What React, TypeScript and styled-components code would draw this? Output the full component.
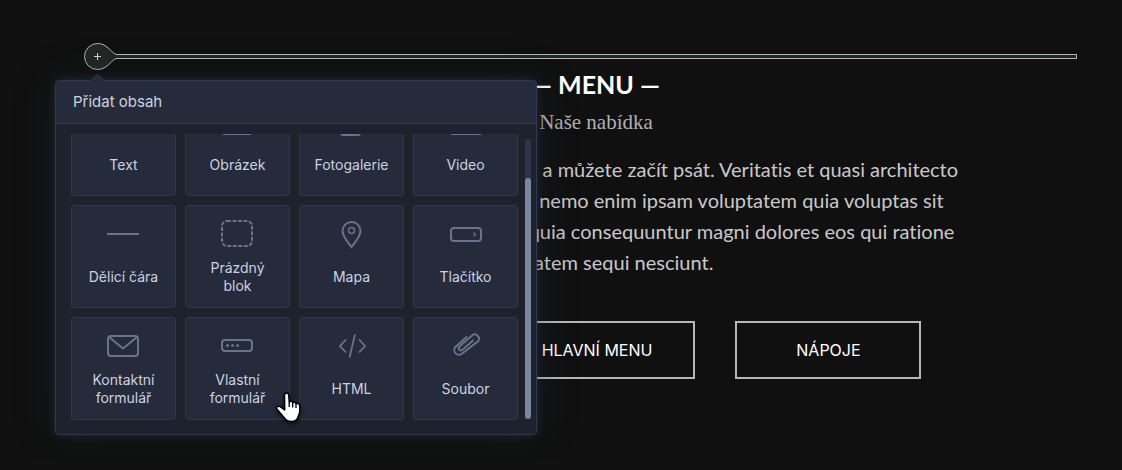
import React, { useLayoutEffect, useRef } from 'react';
import styled, { createGlobalStyle } from 'styled-components';

const GlobalStyle = createGlobalStyle`
  *, *::before, *::after { box-sizing: border-box; }
  html { background: #101010; }
  body {
    margin: 0;
    overflow-x: hidden;
    font-family: Lato, 'Liberation Sans', sans-serif;
    font-variant-ligatures: none;
    color: #c9c9c9;
  }
`;

const Page = styled.div`
  padding: 42px 45px 80px 83px;
`;

const InsertBar = styled.div`
  position: relative;
  display: flex;
  align-items: center;
  height: 28px;
`;

const InsertButton = styled.button`
  display: block;
  flex: none;
  width: 33px;
  height: 28px;
  padding: 0;
  border: 0;
  background: none;
  cursor: pointer;

  svg { display: block; }
`;

const InsertLine = styled.div`
  flex: 1;
  height: 5px;
  background: #222625;
  border: 1px solid #b5b9b6;
  border-left: 0;
`;

const Popover = styled.section`
  position: absolute;
  z-index: 2;
  top: 38px;
  left: -28px;
  width: 482px;
  font-family: Inter, 'Noto Sans', sans-serif;
  color: #ccd2e2;
  background: #1d222d;
  border: 1px solid #2f384e;
  border-radius: 4px;
  box-shadow: 0 0 10px rgba(66, 105, 140, 0.3), 0 0 40px rgba(30, 45, 55, 0.3);
`;

const PopoverArrow = styled.svg`
  position: absolute;
  top: -8px;
  left: 33px;
`;

const PopoverHeader = styled.header`
  display: flex;
  align-items: center;
  height: 43px;
  padding: 0 17px;
  background: #252b3a;
  border-bottom: 1px solid #2f384e;
  border-radius: 3px 3px 0 0;
`;

const PopoverTitle = styled.h2`
  margin: 0;
  font-size: 15px;
  font-weight: 400;
  line-height: 20px;
`;

const PopoverBody = styled.div`
  display: flex;
  gap: 7px;
  padding: 10px 5px 14px 15px;
`;

const BlockScroller = styled.div`
  flex: 1;
  height: 286px;
  overflow-y: auto;
  scrollbar-width: none;
`;

const BlockGrid = styled.div`
  display: grid;
  grid-template-columns: repeat(4, 1fr);
  grid-auto-rows: 103px;
  gap: 9px;
`;

const BlockCard = styled.button`
  display: flex;
  flex-direction: column;
  align-items: center;
  gap: 5px;
  padding: 8px 0 0;
  font: inherit;
  color: inherit;
  background: #252b3a;
  border: 1px solid #30374b;
  border-radius: 3px;
  cursor: pointer;
`;

const BlockIcon = styled.svg`
  flex: none;
  fill: none;
  stroke: #69738c;
  stroke-width: 2;
`;

const BlockLabel = styled.span`
  display: flex;
  align-items: center;
  height: 36px;
  max-width: 80px;
  font-size: 14px;
  line-height: 18px;
  text-align: center;
`;

const ScrollTrack = styled.div`
  display: flex;
  align-items: flex-end;
  width: 6px;
  margin: 5px 0 1px;
  background: #2d3449;
  border-radius: 3px;
`;

const ScrollThumb = styled.div`
  width: 100%;
  height: 86%;
  background: #7b859c;
  border-radius: 3px;
`;

const HandCursor = styled.svg`
  position: absolute;
  top: 310px;
  left: 219px;
  filter: drop-shadow(0 2px 2px rgba(0, 0, 0, 0.6));
  pointer-events: none;
`;

const Content = styled.main`
  display: flex;
  flex-direction: column;
  align-items: center;
  padding-left: 32px;
  text-align: center;
`;

const Heading = styled.h1`
  margin: 0;
  font-size: 25px;
  font-weight: 700;
  line-height: 28px;
  color: #fff;
`;

const Subtitle = styled.p`
  margin: 12px 0 20px;
  font-family: 'Liberation Serif', serif;
  font-size: 21px;
  line-height: 24px;
  color: #b0b0b0;
`;

const Paragraph = styled.p`
  margin: 0;
  font-size: 20px;
  line-height: 31px;
  white-space: nowrap;
`;

const Actions = styled.nav`
  display: flex;
  gap: 40px;
  margin-top: 43px;
`;

const ActionLink = styled.a`
  display: flex;
  align-items: center;
  justify-content: center;
  min-width: 186px;
  height: 58px;
  padding: 0 41px;
  font-family: Inter, sans-serif;
  font-size: 16px;
  color: #fff;
  text-decoration: none;
  border: 2px solid #b8b8b8;
`;

const blocks: { label: string; icon: React.ReactNode }[] = [
  { label: 'Text', icon: <path d="M11 11V7h19v4M20.5 7v22M16 29h9" /> },
  { label: 'Obrázek', icon: <><rect x="5" y="7" width="30" height="25" rx="3" /><path d="M6 26l8-9 7 8 5-5 8 7" /></> },
  { label: 'Fotogalerie', icon: <><rect x="4" y="6" width="28" height="21" rx="3" /><path d="M10 31q0 2 2 2h15q2 0 2-2" /></> },
  { label: 'Video', icon: <><rect x="5" y="7" width="32" height="25" rx="3" /><path d="M17 14l9 5-9 6z" /></> },
  { label: 'Dělicí čára', icon: <path d="M4 20h32" /> },
  { label: 'Prázdný blok', icon: <rect x="5" y="7" width="30" height="25" rx="5" strokeDasharray="4 1.5" /> },
  {
    label: 'Mapa',
    icon: (
      <>
        <path d="M20.5 33C17 28.5 11.5 22.5 11.5 17a9 9 0 0 1 18 0C29.5 22.5 24 28.5 20.5 33z" />
        <circle cx="20.5" cy="16.5" r="3" strokeWidth="1.5" />
      </>
    ),
  },
  {
    label: 'Tlačítko',
    icon: (
      <>
        <rect x="6" y="14" width="30" height="13" rx="3" />
        <path d="M28.5 18.5l2 2-2 2" strokeWidth="1.2" />
      </>
    ),
  },
  {
    label: 'Kontaktní formulář',
    icon: (
      <>
        <rect x="5" y="10" width="30" height="20" rx="3" />
        <path d="M6 11l14 11.5L34 11" />
      </>
    ),
  },
  {
    label: 'Vlastní formulář',
    icon: (
      <>
        <rect x="5" y="14" width="30" height="11" rx="3" />
        <path d="M10.5 19.5h.01M15.5 19.5h.01M20.5 19.5h.01" strokeWidth="3" strokeLinecap="round" />
      </>
    ),
  },
  { label: 'HTML', icon: <path d="M15 13.5L9 20l6 6.5M24 8.5L18.5 31.5M28 13.5l6 6.5-6 6.5" strokeWidth="1.8" /> },
  {
    label: 'Soubor',
    icon: (
      <path
        d="M21.5 11L10.7 20.7a4.7 4.7 0 0 0 6.6 6.7L33 15.3a4.2 4.2 0 0 0-6-5.8L14.8 20.3c-2.8 2.7.4 5.4 2.800 3.4L28 14.5"
        strokeWidth="1.9"
        strokeLinecap="round"
      />
    ),
  },
];

function AddContentPopover() {
  const scroller = useRef<HTMLDivElement>(null);

  useLayoutEffect(() => {
    const el = scroller.current;
    if (el) el.scrollTop = el.scrollHeight;
  }, []);

  return (
    <Popover aria-labelledby="add-content-title">
      <PopoverArrow width="18" height="9" viewBox="0 0 18 9" aria-hidden="true">
        <path d="M1 8.5L8.5 1L16 8.5" fill="#252b3a" stroke="#2f384e" />
      </PopoverArrow>
      <PopoverHeader>
        <PopoverTitle id="add-content-title">Přidat obsah</PopoverTitle>
      </PopoverHeader>
      <PopoverBody>
        <BlockScroller ref={scroller}>
          <BlockGrid>
            {blocks.map(({ label, icon }) => (
              <BlockCard key={label} type="button">
                <BlockIcon width="41" height="40" viewBox="0 0 41 40" aria-hidden="true">{icon}</BlockIcon>
                <BlockLabel>{label}</BlockLabel>
              </BlockCard>
            ))}
          </BlockGrid>
        </BlockScroller>
        <ScrollTrack>
          <ScrollThumb />
        </ScrollTrack>
      </PopoverBody>
      <HandCursor width="28" height="34" viewBox="0 0 28 34" aria-hidden="true">
        <path
          d="M9.5 4.5c0-3.2 4-3.2 4.3 0l.4 6.5c.8-1.2 3.2-.9 3.5.8 1-1 3-.6 3.3 1 1.2-.8 3.5-.2 3.7 2l.1 5c0 3-1.3 4.2-1.8 6.2-.8 3-3.3 4.5-6.5 4.5-3 0-5.3-1-7-3.5L2.2 18.5c-1.7-2.4 1-4.3 3.3-2.7L9.7 19z"
          fill="#fff"
          stroke="#000"
          strokeWidth="1.5"
          strokeLinejoin="round"
        />
        <path d="M14.2 11v5M17.7 11.8v4.7M21 12.8v4.2" fill="none" stroke="#000" strokeWidth="1.3" />
      </HandCursor>
    </Popover>
  );
}

export default function App() {
  return (
    <>
      <GlobalStyle />
      <Page>
        <InsertBar>
          <InsertButton type="button" aria-label="Přidat obsah">
            <svg width="33" height="28" viewBox="0 0 33 28" aria-hidden="true">
              <path
                d="M33 12.5C29.5 11 27.5 7.5 23 4.3C20.5 2.5 17.5 1.5 14.5 1.5A13 13 0 0 0 14.5 27.5C17.5 27.5 20.5 26.5 23 24.7C27.5 21.5 29.5 18 33 16.5"
                fill="#222625"
                stroke="#b5b9b6"
              />
              <path d="M11 14.5h7M14.5 11v7" stroke="#d5d8d6" />
            </svg>
          </InsertButton>
          <InsertLine />
          <AddContentPopover />
        </InsertBar>
        <Content>
          <Heading>— MENU —</Heading>
          <Subtitle>Naše nabídka</Subtitle>
          <Paragraph>
            Zde je váš blok textu. Klikněte sem a můžete začít psát. Veritatis et quasi architecto
            <br />
            beatae vitae dicta sunt explicabo nemo enim ipsam voluptatem quia voluptas sit
            <br />
            aspernatur aut odit aut fugit, sed quia consequuntur magni dolores eos qui ratione
            <br />
            voluptatem sequi nesciunt.
          </Paragraph>
          <Actions>
            <ActionLink href="#denni-menu">DENNÍ MENU</ActionLink>
            <ActionLink href="#hlavni-menu">HLAVNÍ MENU</ActionLink>
            <ActionLink href="#napoje">NÁPOJE</ActionLink>
          </Actions>
        </Content>
      </Page>
    </>
  );
}
